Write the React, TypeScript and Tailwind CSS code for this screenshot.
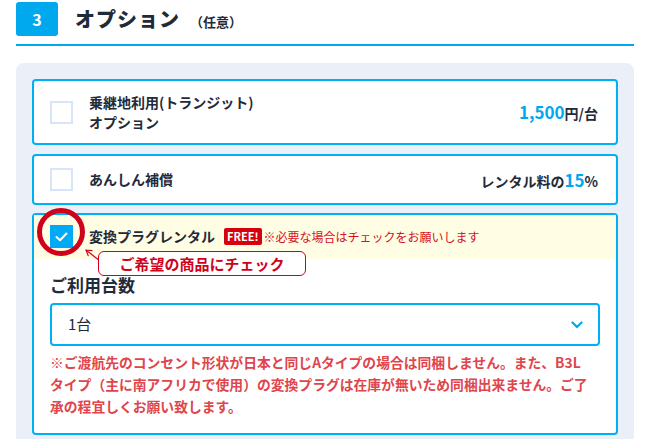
import React from "react";

const font = { fontFamily: '"Noto Sans CJK JP", "Noto Sans", sans-serif' };

function Chevron() {
  return (
    <svg width="12" height="8" viewBox="0 0 12 8" fill="none">
      <path d="M1.5 1.5 L6 6 L10.5 1.5" stroke="#00a9ee" strokeWidth="2.2" strokeLinecap="round" strokeLinejoin="round" />
    </svg>
  );
}

export default function App() {
  return (
    <div className="w-[650px] h-[439px] overflow-hidden bg-white text-[#1f2b3a]" style={font}>
      {/* header */}
      <div className="flex items-center px-4 pt-[2px]">
        <div className="w-[42px] h-[34px] rounded-[3px] bg-[#00a9ee] text-white font-bold text-[16px] flex items-center justify-center">3</div>
        <div className="ml-[17px] text-[20px] font-black tracking-[1px] leading-none">オプション</div>
        <div className="ml-[10px] mt-[4px] text-[13px] font-bold leading-none">（任意）</div>
      </div>
      <div className="mx-4 mt-[8px] h-[2px] bg-[#00a9ee]" />

      {/* panel */}
      <div className="mx-4 mt-[17px] bg-[#ebeff7] rounded-t-[8px] px-4 pt-4 h-[400px]">
        {/* card 1 */}
        <div className="h-[66px] border-2 border-[#00b0f5] rounded-[4px] bg-white flex items-center pl-4 pr-[18px]">
          <div className="w-[23px] h-[23px] border-2 border-[#d7e4fa] bg-white" />
          <div className="ml-4 text-[14px] font-bold leading-[20px]">
            乗継地利用(トランジット)<br />オプション
          </div>
          <div className="ml-auto font-bold text-[14px] flex items-baseline">
            <span className="text-[17px] text-[#00a9ee]">1,500</span>
            <span>円/台</span>
          </div>
        </div>

        {/* card 2 */}
        <div className="mt-[9px] h-[51px] border-2 border-[#00b0f5] rounded-[4px] bg-white flex items-center pl-4 pr-[18px]">
          <div className="w-[23px] h-[23px] border-2 border-[#d7e4fa] bg-white" />
          <div className="ml-4 text-[14px] font-bold">あんしん補償</div>
          <div className="ml-auto font-bold text-[14px] flex items-baseline">
            <span>レンタル料の</span>
            <span className="text-[17px] text-[#00a9ee]">15</span>
            <span>%</span>
          </div>
        </div>

        {/* card 3 */}
        <div className="relative mt-[8px] border-2 border-[#00b0f5] rounded-[4px] bg-white pb-[16px]">
          <div className="h-[44px] bg-[#fffde3] flex items-start pt-[10px] pl-4">
            <div className="w-[23px] h-[23px] bg-[#00aaf5] flex items-center justify-center">
              <svg width="13" height="10" viewBox="0 0 13 10" fill="none">
                <path d="M1.5 5 L5 8.2 L11.5 1.5" stroke="white" strokeWidth="2" strokeLinecap="round" strokeLinejoin="round" />
              </svg>
            </div>
            <div className="ml-4 h-[23px] flex items-center">
              <span className="text-[14px] font-bold">変換プラグレンタル</span>
              <span className="ml-[9px] bg-[#d7000f] text-white text-[11px] font-bold leading-none px-[3px] py-[3px] rounded-[2px]">FREE!</span>
              <span className="ml-[2px] text-[12px] text-[#d2121c]">※必要な場合はチェックをお願いします</span>
            </div>
          </div>

          {/* red circle overlay */}
          <div className="absolute left-[3px] top-[-7px] w-[48px] h-[48px] rounded-full border-[5px] border-[#d0021b]" />
          {/* arrow */}
          <svg className="absolute left-[50px] top-[32px]" width="17" height="17" viewBox="0 0 17 17" fill="none">
            <path d="M16 14 L2 3" stroke="#d0021b" strokeWidth="1.2" />
            <path d="M2 3 L8 3.6 M2 3 L4.2 8.6" stroke="#d0021b" strokeWidth="1.2" strokeLinecap="round" />
          </svg>
          {/* callout */}
          <div className="absolute left-[64px] top-[36px] w-[208px] h-[25px] rounded-[6px] border border-[#d0021b] bg-white flex items-center justify-center text-[15px] font-bold text-[#d0021b] leading-none">
            ご希望の商品にチェック
          </div>

          <div className="px-4">
            <div className="mt-[17px] text-[17px] font-bold leading-none">ご利用台数</div>
            <div className="mt-[10px] h-[43px] border-2 border-[#00b0f5] rounded-[4px] flex items-center pl-4 pr-[15px]">
              <span className="text-[15px]">1台</span>
              <span className="ml-auto"><Chevron /></span>
            </div>
            <div className="mt-[5px] text-[13.8px] font-bold text-[#e0454c] leading-[22px]">
              ※ご渡航先のコンセント形状が日本と同じAタイプの場合は同梱しません。また、B3L<br />
              タイプ（主に南アフリカで使用）の変換プラグは在庫が無いため同梱出来ません。ご了<br />
              承の程宜しくお願い致します。
            </div>
          </div>
        </div>
      </div>
    </div>
  );
}
